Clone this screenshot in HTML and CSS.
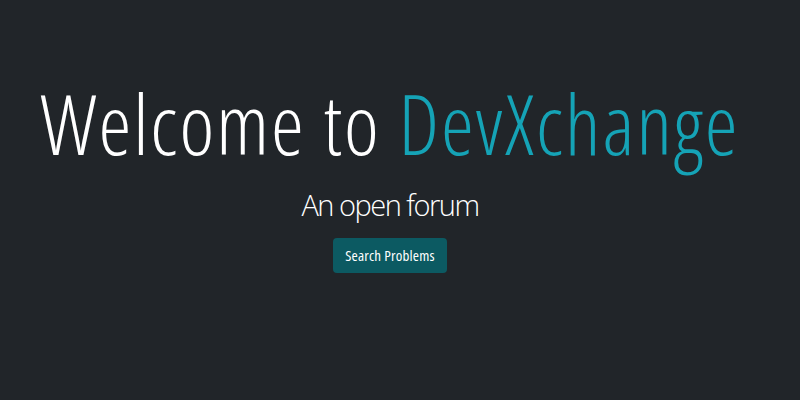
FILE: index.html
```html
<!DOCTYPE html>
<html lang="en">
<head>
<meta charset="utf-8">
<title>DevXchange</title>
<link rel="stylesheet" href="styles.css">
</head>
<body>
<main class="hero">
  <h1 class="hero-title">Welcome to <span class="brand">DevXchange</span></h1>
  <p class="hero-sub">An open forum</p>
  <a class="btn-search" href="#">Search Problems</a>
</main>
</body>
</html>
```
FILE: styles.css
```css
html, body {
  margin: 0;
  height: 100%;
  background: #212529;
}
body {
  font-family: "Open Sans", "Liberation Sans", sans-serif;
  color: #ffffff;
}
.hero {
  display: flex;
  flex-direction: column;
  align-items: center;
  padding: 73px 20px 0 0;
}
.hero-title {
  margin: 0;
  font-size: 83px;
  font-weight: 300;
  font-stretch: 75%;
  letter-spacing: 2px;
  line-height: 1.2;
  white-space: nowrap;
}
.brand {
  color: #15a3b6;
}
.hero-sub {
  margin: 15px 0 0;
  font-size: 29px;
  font-weight: 300;
  letter-spacing: -1.5px;
  line-height: 1.2;
}
.btn-search {
  margin-top: 16px;
  display: inline-block;
  padding: 8px 12px;
  background: #0c5a62;
  color: #ffffff;
  text-decoration: none;
  font-size: 15px;
  font-stretch: 75%;
  letter-spacing: 0.2px;
  line-height: 19px;
  border-radius: 4px;
}
```
